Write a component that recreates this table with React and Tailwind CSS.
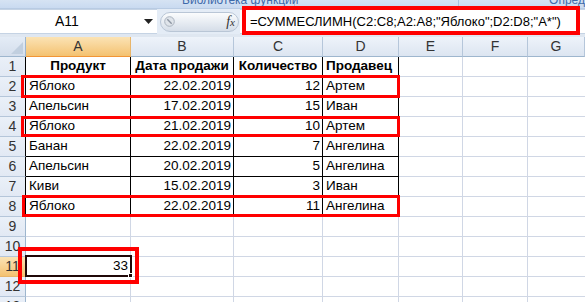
import React from "react";

const rows = [
  ["Продукт", "Дата продажи", "Количество", "Продавец"],
  ["Яблоко", "22.02.2019", "12", "Артем"],
  ["Апельсин", "17.02.2019", "15", "Иван"],
  ["Яблоко", "21.02.2019", "10", "Артем"],
  ["Банан", "22.02.2019", "7", "Ангелина"],
  ["Апельсин", "20.02.2019", "5", "Ангелина"],
  ["Киви", "15.02.2019", "3", "Иван"],
  ["Яблоко", "22.02.2019", "11", "Ангелина"],
];

const cols = ["A", "B", "C", "D", "E", "F", "G"];
const gridCols = "grid grid-cols-[26px_105px_103px_89px_76px_64px_65px_1fr]";

function HeaderCell({ label, active }) {
  return (
    <div
      className={
        "h-[20px] flex items-center justify-center border-r border-b text-[14px] text-[#333] " +
        (active
          ? "bg-gradient-to-b from-[#fbe3b4] to-[#f4c270] border-r-[#e8b56a] border-b-[#f29536]"
          : "bg-gradient-to-b from-[#eef3fa] to-[#dce5f1] border-r-[#b5c6da] border-b-[#9eb6ce]")
      }
    >
      {label}
    </div>
  );
}

function RowHeader({ n, inTable }) {
  const active = n === 11;
  return (
    <div
      className={
        "h-[20px] flex items-center justify-center border-r border-b text-[14px] text-[#333] " +
        (active
          ? "bg-gradient-to-b from-[#fbe3b4] to-[#f4c270] border-b-[#e8b56a] "
          : "bg-gradient-to-b from-[#eaf0f8] to-[#e2e9f4] border-b-[#b5c6da] ") +
        (inTable ? "border-r-black" : active ? "border-r-[#f29536]" : "border-r-[#9eb6ce]")
      }
    >
      {n}
    </div>
  );
}

function Cell({ children, align = "left", bold, table, last }) {
  const border = table
    ? "border-r-black border-b-black"
    : "border-r-[#d0d7e5] border-b-[#d0d7e5]";
  const just =
    align === "right" ? "justify-end pr-[2px]" : align === "center" ? "justify-center" : "justify-start pl-[3px]";
  return (
    <div
      className={
        "h-[20px] flex items-center whitespace-nowrap overflow-visible border-b text-[13.5px] text-black " +
        (last ? "" : "border-r ") +
        border +
        " " +
        just +
        (bold ? " font-bold" : "")
      }
    >
      {children}
    </div>
  );
}

function SheetRow({ n }) {
  const data = n <= 8 ? rows[n - 1] : null;
  const cells = [];
  for (let c = 0; c < 7; c++) {
    let content = null;
    let align = "left";
    let table = false;
    let bold = false;
    if (data && c < 4) {
      table = true;
      content = data[c];
      if (n === 1) {
        bold = true;
        align = c === 3 ? "left" : "center";
      } else if (c === 1 || c === 2) {
        align = "right";
      }
    }
    if (n === 11 && c === 0) {
      content = "33";
      align = "right";
    }
    cells.push(
      <Cell key={c} align={align} bold={bold} table={table} last={c === 6}>
        {content}
      </Cell>
    );
  }
  return (
    <div className={gridCols}>
      <RowHeader n={n} inTable={n <= 8} />
      {cells}
    </div>
  );
}

function RedBox({ className }) {
  return <div className={"absolute border-[#ff0000] pointer-events-none " + className} />;
}

export default function App() {
  return (
    <div className="relative w-[585px] h-[302px] overflow-hidden bg-white font-['Liberation_Sans',Arial,sans-serif]">
      {/* ribbon group captions, clipped at the top */}
      <div className="h-[9px] overflow-hidden bg-gradient-to-b from-[#d6e3f3] to-[#c9daf0] flex border-b border-[#b8cbe3] text-[12px] leading-[15px] text-[#3e6aaa] whitespace-nowrap">
        <div className="w-[295px] flex items-end pl-[182px] border-r border-[#a9c0de]">
          <span className="shrink-0">Библиотека функций</span>
        </div>
        <div className="w-[179px] border-r border-[#a9c0de]" />
        <div className="flex-1 flex items-end pl-[90px]">
          <span className="shrink-0">Опред</span>
        </div>
      </div>

      {/* name box and formula bar */}
      <div className="h-[25px] flex bg-[#e4ecf6]">
        <div className="w-[157px] bg-white border-t border-b border-[#c5d3e4] flex items-center pl-[55px] pr-[4px]">
          <span className="text-[14px] text-black">A11</span>
          <svg className="ml-auto" width="9" height="5" viewBox="0 0 9 5">
            <path d="M0 0h9L4.5 5z" fill="#222" />
          </svg>
        </div>
        <div className="w-[83px] flex items-center pl-[3px]">
          <div className="w-[79px] h-[20px] rounded-full border border-[#b9c6d6] bg-gradient-to-b from-[#fbfcfd] via-[#e8edf3] to-[#d5dde8] flex items-center pl-[3px] pr-[3px]">
            <svg width="11" height="11" viewBox="0 0 11 11">
              <circle cx="5.5" cy="5.5" r="4.8" fill="#dfe4ea" stroke="#aab3bf" />
              <path d="M3.3 3.3l4.4 4.4" stroke="#8d96a3" strokeWidth="1.4" />
            </svg>
            <span className="ml-auto font-['Liberation_Serif',serif] italic text-[14px] text-[#333] leading-[16px]">
              f<span className="text-[11px]">x</span>
            </span>
          </div>
        </div>
        <div className="flex-1 bg-white border-t border-b border-[#c5d3e4] flex items-center pl-[10px] text-[13px] text-black whitespace-nowrap">
          =СУММЕСЛИМН(C2:C8;A2:A8;"Яблоко";D2:D8;"A*")
        </div>
      </div>

      <div className="h-[3px] bg-[#dfe7f1]" />

      {/* column headers */}
      <div className={gridCols}>
        <div className="h-[20px] flex items-end justify-end p-[2px] border-r border-b border-r-[#9eb6ce] border-b-[#9eb6ce] bg-gradient-to-b from-[#e4ecf6] to-[#d4deec]">
          <svg width="12" height="12" viewBox="0 0 12 12">
            <path d="M12 0V12H0z" fill="#c1cfdf" />
          </svg>
        </div>
        {cols.map((c, i) => (
          <HeaderCell key={c} label={c} active={i === 0} />
        ))}
      </div>

      {Array.from({ length: 13 }, (_, i) => (
        <SheetRow key={i} n={i + 1} />
      ))}

      {/* active cell A11 with fill handle */}
      <div className="absolute left-[25px] top-[255px] w-[107px] h-[22px] border-2 border-[#200808]" />
      <div className="absolute left-[128px] top-[273px] w-[5px] h-[5px] bg-[#200808] border border-white" />

      {/* highlight frames */}
      <RedBox className="left-[242px] top-[6px] w-[338px] h-[29px] border-[4px]" />
      <RedBox className="left-[21px] top-[75px] w-[379px] h-[23px] border-[3px]" />
      <RedBox className="left-[21px] top-[116px] w-[379px] h-[21px] border-[3px]" />
      <RedBox className="left-[22px] top-[195px] w-[378px] h-[22px] border-[3px]" />
      <RedBox className="left-[18px] top-[247px] w-[121px] h-[37px] border-[4px]" />
    </div>
  );
}
